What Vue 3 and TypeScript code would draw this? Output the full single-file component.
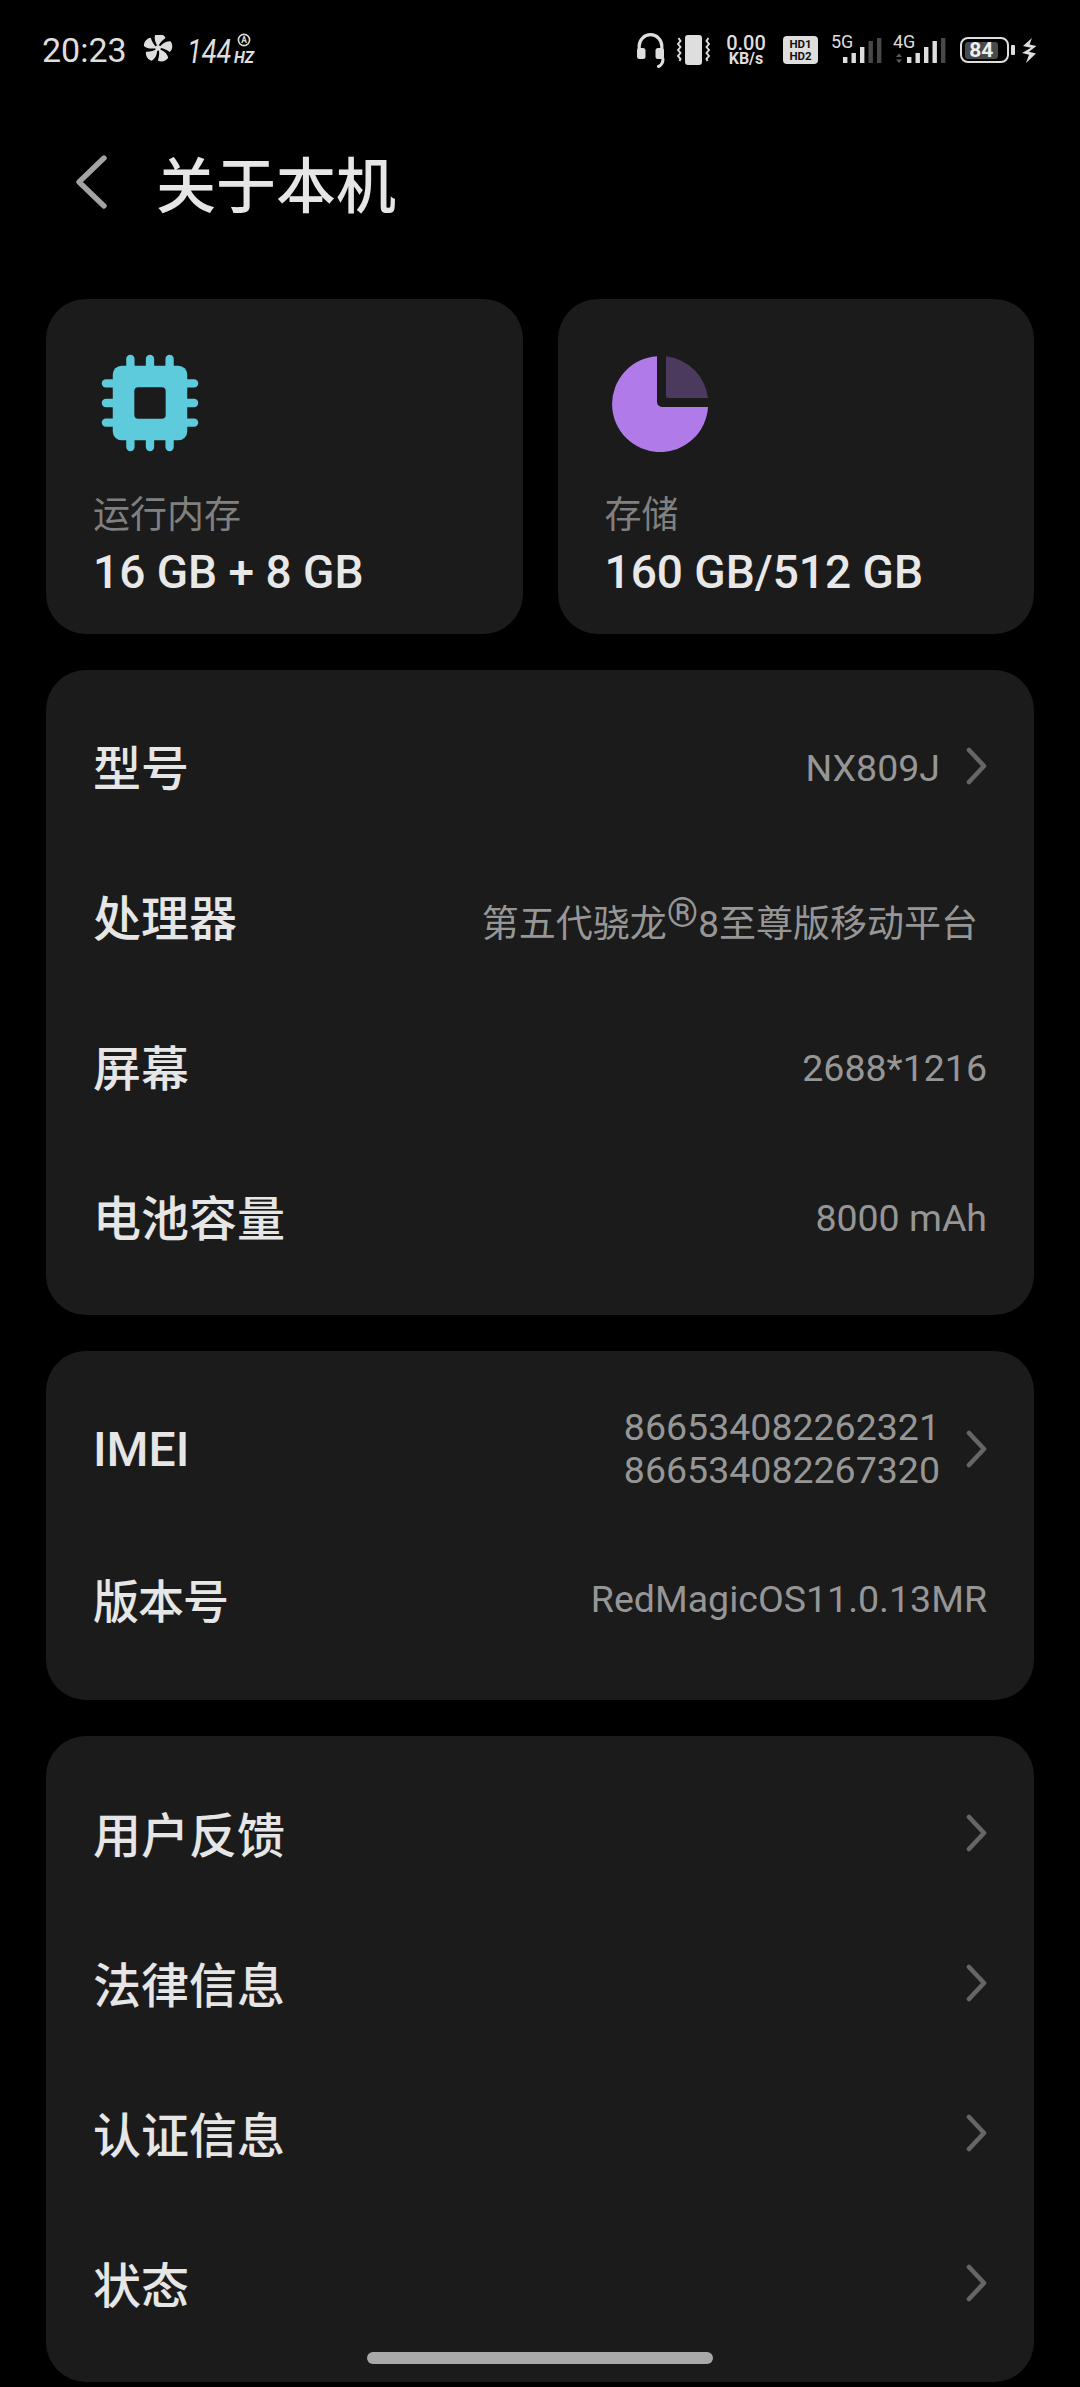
<script setup lang="ts">
interface Row {
  label: string
  value?: string
  lines?: string[]
  chevron?: boolean
  compact?: boolean
}

const specRows: Row[] = [
  { label: '型号', value: 'NX809J', chevron: true },
  { label: '处理器' },
  { label: '屏幕', value: '2688*1216' },
  { label: '电池容量', value: '8000 mAh' },
]
const idRows: Row[] = [
  { label: 'IMEI', lines: ['866534082262321', '866534082267320'], chevron: true },
  { label: '版本号', value: 'RedMagicOS11.0.13MR', compact: true },
]
const linkRows: Row[] = [
  { label: '用户反馈', chevron: true },
  { label: '法律信息', chevron: true },
  { label: '认证信息', chevron: true },
  { label: '状态', chevron: true },
]
const groups = [
  { name: 'spec', rows: specRows },
  { name: 'ids', rows: idRows },
  { name: 'links', rows: linkRows },
]
const chipPins = [-20, 0, 20]
const fanBlades = [0, 72, 144, 216, 288]
const bars5g = [
  { x: 12, h: 6, on: true },
  { x: 20.5, h: 10, on: true },
  { x: 29, h: 16, on: true },
  { x: 37.5, h: 22, on: false },
  { x: 46, h: 25, on: false },
]
const bars4g = [
  { x: 14, h: 6, on: true },
  { x: 22.5, h: 10, on: true },
  { x: 31, h: 16, on: true },
  { x: 39.5, h: 22, on: true },
  { x: 48, h: 25, on: false },
]
</script>

<template>
  <div class="page">
    <header class="status">
      <div class="status-left">
        <span class="clock">20:23</span>
        <svg class="fan" width="30" height="30" viewBox="-15 -13 30 30">
          <path
            v-for="a in fanBlades"
            :key="a"
            :transform="`rotate(${a})`"
            d="M0 -1C-2.500 -5 -4.500 -9 -2.500 -14C1.500 -15.500 6 -13.500 7.500 -10C4.500 -8 1.500 -5 0 -1Z"
            fill="#dedede"
          />
          <circle r="2.8" fill="#dedede" />
        </svg>
        <svg class="rate" width="68" height="48" viewBox="0 -4 68 48">
          <text x="0" y="33" class="rate-num" transform="scale(.8 1)">144</text>
          <circle cx="57" cy="10" r="5.6" fill="none" stroke="#dedede" stroke-width="1.6" />
          <text x="57" y="13" class="rate-a">A</text>
          <text x="47" y="33" class="rate-hz" textLength="20" lengthAdjust="spacingAndGlyphs">HZ</text>
        </svg>
      </div>
      <div class="status-right">
        <svg class="i-headset" width="29" height="36" viewBox="0 0 29 36">
          <path d="M3.2 20V14a11.3 11.3 0 0 1 22.6 0v6" fill="none" stroke="#dedede" stroke-width="3.2" />
          <rect x="1" y="16" width="8.5" height="11" rx="2.5" fill="#dedede" />
          <rect x="19.5" y="16" width="8.5" height="11" rx="2.5" fill="#dedede" />
          <path d="M27 27c0 4-1 6-4.500 7.500" fill="none" stroke="#dedede" stroke-width="3" stroke-linecap="round" />
        </svg>
        <svg class="i-vibrate" width="35" height="32" viewBox="0 0 35 32">
          <rect x="9" y="1" width="17" height="30" rx="3" fill="#dedede" />
          <path d="M2.500 4l2 3-2.500 3 2.500 3-2.500 3 2.500 3-2.500 3 2.500 3-1 2" fill="none" stroke="#dedede" stroke-width="1.9" />
          <path d="M32.500 4l-2 3 2.500 3-2.500 3 2.500 3-2.500 3 2.500 3-2.500 3 1 2" fill="none" stroke="#dedede" stroke-width="1.9" />
        </svg>
        <div class="speed">
          <span class="speed-num">0.00</span>
          <span class="speed-unit">KB/s</span>
        </div>
        <div class="hd">
          <span>HD1</span>
          <span>HD2</span>
        </div>
        <svg class="i-signal" width="60" height="40" viewBox="0 0 60 40">
          <text x="0" y="18" class="net">5G</text>
          <rect
            v-for="b in bars5g"
            :key="b.x"
            :x="b.x"
            :y="33 - b.h"
            width="4.4"
            :height="b.h"
            :fill="b.on ? '#dedede' : '#484848'"
          />
        </svg>
        <svg class="i-signal i-4g" width="54" height="40" viewBox="0 0 54 40">
          <text x="0" y="18" class="net">4G</text>
          <path d="M3 27l3-3.500 3 3.500zM3 29.500l3 3.500 3-3.500z" fill="#5c5c5c" />
          <rect
            v-for="b in bars4g"
            :key="b.x"
            :x="b.x"
            :y="33 - b.h"
            width="4.4"
            :height="b.h"
            :fill="b.on ? '#dedede' : '#484848'"
          />
        </svg>
        <div class="battery">
          <div class="battery-body">
            <span class="battery-num">84</span>
          </div>
          <div class="battery-nub"></div>
        </div>
        <svg class="i-bolt" width="16" height="25" viewBox="0 0 16 25">
          <path d="M11 0L2 8l8 1.800L1 15l7 1.800L5 25l10-9.500-7-1.800 7.500-5.700L8.500 6.500z" fill="#dedede" />
        </svg>
      </div>
    </header>

    <div class="title-bar">
      <svg class="back" width="34" height="56" viewBox="0 0 34 56">
        <path d="M30 4L5 28l25 24" fill="none" stroke="#a3a3a3" stroke-width="5.400" stroke-linecap="round" stroke-linejoin="round" />
      </svg>
      <h1 class="title">关于本机</h1>
    </div>

    <main class="content">
      <section class="top-cards">
        <div class="card top-card">
          <svg class="top-icon chip" width="98" height="98" viewBox="-50 -50 100 100">
            <g stroke="#5dcbdb" stroke-width="8.500" stroke-linecap="round">
              <template v-for="p in chipPins" :key="p">
                <path :d="`M${p} -45V45`" />
                <path :d="`M-45 ${p}H45`" />
              </template>
            </g>
            <rect x="-38" y="-38" width="76" height="76" rx="9" fill="#5dcbdb" />
            <rect x="-16" y="-16" width="32" height="32" rx="4" fill="#1b1b1b" />
          </svg>
          <div class="top-label">运行内存</div>
          <div class="top-value">16 GB + 8 GB</div>
        </div>
        <div class="card top-card">
          <svg class="top-icon pie" width="98" height="98" viewBox="0 0 98 98">
            <path d="M45 2.200V48a5 5 0 0 0 5 5H96A48 48 0 1 1 45 2.200Z" fill="#b07be8" />
            <path d="M54 2.200A48 48 0 0 1 96 44H56a2 2 0 0 1-2-2Z" fill="#4b3a5e" />
          </svg>
          <div class="top-label">存储</div>
          <div class="top-value">160 GB/512 GB</div>
        </div>
      </section>

      <section v-for="g in groups" :key="g.name" class="card list" :class="g.name">
        <div v-for="row in g.rows" :key="row.label" class="row">
          <span class="row-label" :class="{ latin: row.lines, compact: row.compact }">{{ row.label }}</span>
          <span class="row-right">
            <span v-if="row.label === '处理器'" class="row-value soc">第五代骁龙<span class="reg">®</span>8至尊版移动平台</span>
            <span v-else-if="row.lines" class="row-value lines">
              <span v-for="line in row.lines" :key="line">{{ line }}</span>
            </span>
            <span v-else-if="row.value" class="row-value">{{ row.value }}</span>
            <svg v-if="row.chevron" class="chev" width="23" height="38" viewBox="0 0 23 38">
              <path d="M5 3l15 16-15 16" fill="none" stroke="#666" stroke-width="4.600" stroke-linecap="round" stroke-linejoin="round" />
            </svg>
          </span>
        </div>
      </section>
    </main>

    <div class="home-bar"></div>
  </div>
</template>

<style>
html,
body {
  margin: 0;
  background: #000;
}
</style>

<style scoped>
.page {
  position: relative;
  width: 1080px;
  height: 2387px;
  overflow: hidden;
  background: #000;
  color: #e6e6e6;
  font-family: Roboto, "Noto Sans CJK SC", sans-serif;
}
.status {
  height: 100px;
  padding: 32px 43px 0 42px;
  box-sizing: border-box;
  display: flex;
  justify-content: space-between;
  align-items: flex-start;
}
.status-left {
  display: flex;
  align-items: center;
  height: 36px;
}
.clock {
  font-size: 34px;
  line-height: 36px;
  color: #dedede;
}
.fan {
  margin-left: 16px;
}
.rate {
  margin-left: 14px;
}
.rate-num {
  font: italic 400 34px Roboto, sans-serif;
  fill: #dedede;
}
.rate-a {
  font: 700 8.500px Roboto, sans-serif;
  fill: #dedede;
  text-anchor: middle;
}
.rate-hz {
  font: italic 700 16px Roboto, sans-serif;
  fill: #dedede;
}
.status-right {
  display: flex;
  align-items: center;
  height: 36px;
}
.i-vibrate {
  margin-left: 11px;
}
.speed {
  margin-left: 15px;
  display: flex;
  flex-direction: column;
  align-items: center;
  width: 40px;
  color: #dedede;
}
.speed-num {
  font-size: 20px;
  line-height: 18px;
  font-weight: 500;
}
.speed-unit {
  font-size: 16px;
  line-height: 14px;
  font-weight: 700;
}
.hd {
  margin-left: 17px;
  width: 35px;
  height: 28px;
  background: #dedede;
  border-radius: 4px;
  color: #111;
  display: flex;
  flex-direction: column;
  align-items: center;
  justify-content: center;
  font-size: 11.500px;
  line-height: 12px;
  font-weight: 700;
}
.i-signal {
  margin-left: 13px;
  flex: none;
}
.i-4g {
  margin-left: 2px;
}
.net {
  font: 400 18px Roboto, sans-serif;
  fill: #dedede;
}
.battery {
  margin-left: 13px;
  display: flex;
  align-items: center;
}
.battery-body {
  width: 49px;
  height: 26px;
  box-sizing: border-box;
  border: 2.500px solid #dedede;
  border-radius: 8px;
  padding: 2.500px;
  display: flex;
}
.battery-num {
  flex: 0 0 84%;
  background: #4a4a4a;
  border-radius: 3px;
  text-align: center;
  color: #eee;
  font-size: 21px;
  line-height: 16px;
  font-weight: 700;
}
.battery-nub {
  width: 4px;
  height: 10px;
  margin-left: 2px;
  background: #dedede;
  border-radius: 1px;
}
.i-bolt {
  margin-left: 6px;
}
.title-bar {
  height: 199px;
  padding-bottom: 29px;
  box-sizing: border-box;
  display: flex;
  align-items: center;
  padding-left: 74px;
}
.back {
  margin-bottom: 7px;
}
.title {
  margin: 0 0 0 48px;
  padding-top: 6px;
  font-size: 60px;
  line-height: 70px;
  font-weight: 500;
  color: #e6e6e6;
}
.content {
  padding: 0 46px;
  display: flex;
  flex-direction: column;
  gap: 36px;
}
.top-cards {
  display: grid;
  grid-template-columns: 1fr 1fr;
  gap: 35px;
}
.card {
  background: #1b1b1b;
  border-radius: 40px;
}
.top-card {
  height: 335px;
  box-sizing: border-box;
  padding: 55px 47px 0;
  display: flex;
  flex-direction: column;
}
.top-icon {
  display: block;
  margin-left: 8px;
}
.pie {
  margin-left: 7px;
}
.top-label {
  margin-top: 39px;
  font-size: 37px;
  line-height: 50px;
  color: #808080;
}
.top-value {
  margin-top: 4px;
  font-size: 46px;
  line-height: 54px;
  font-weight: 500;
  color: #e8e8e8;
}
.list {
  padding: 21px 47px 24px;
}
.ids {
  padding: 23px 47px 26px;
}
.links {
  padding: 22px 47px 24px;
}
.row {
  height: 150px;
  display: flex;
  align-items: center;
  justify-content: space-between;
}
.row-label {
  font-size: 48px;
  font-weight: 500;
  color: #e6e6e6;
  padding-bottom: 2px;
}
.row-label.latin {
  padding-bottom: 0;
}
.row-label.compact {
  font-size: 46px;
  letter-spacing: -1px;
}
.row-right {
  display: flex;
  align-items: center;
}
.row-value {
  font-size: 37.500px;
  line-height: 43px;
  color: #969696;
}
.spec .row-value {
  padding-top: 5px;
}
.lines {
  display: flex;
  flex-direction: column;
}
.spec .soc {
  margin-right: 9px;
  padding-top: 17px;
  font-size: 37px;
}
.reg {
  font-size: 40px;
  vertical-align: 10px;
  line-height: 0;
}
.chev {
  margin-left: 24px;
  flex: none;
}
.home-bar {
  position: absolute;
  left: 367px;
  top: 2352px;
  width: 346px;
  height: 12px;
  background: #a9a9a9;
  border-radius: 6px;
}
</style>
